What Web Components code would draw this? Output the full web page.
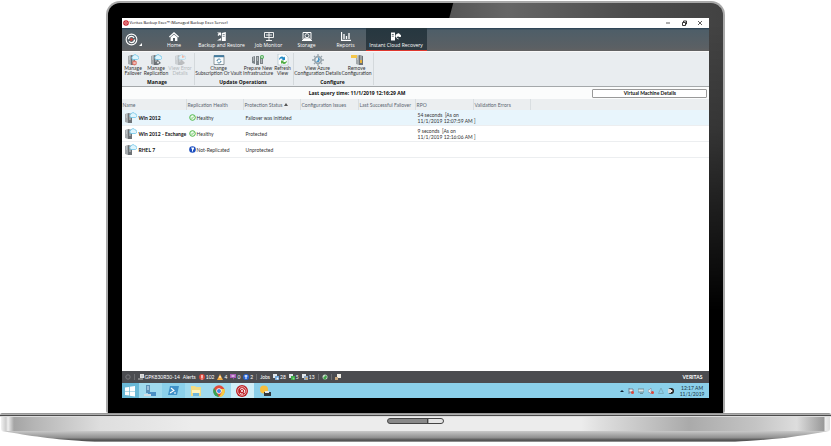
<!DOCTYPE html>
<html lang="en">
<head>
<meta charset="utf-8">
<title>Backup Exec</title>
<style>
html,body{margin:0;height:100%}
body{background:#fff;font:5px/6px Lato,"Open Sans",sans-serif;color:#333;display:flex;flex-direction:column}
</style>
</head>
<body>
<laptop-frame>
  <app-window>
    <title-bar></title-bar>
    <main-nav></main-nav>
    <ribbon-bar></ribbon-bar>
    <query-bar></query-bar>
    <vm-table></vm-table>
    <status-bar></status-bar>
    <task-bar></task-bar>
  </app-window>
</laptop-frame>
<script>
const svg=(w,h,body,vb)=>`<svg width="${w}" height="${h}" viewBox="${vb||`0 0 ${w} ${h}`}" aria-hidden="true">${body}</svg>`;
const define=(name,css,html)=>customElements.define(name,class extends HTMLElement{
  connectedCallback(){
    if(this.shadowRoot)return;
    const t=document.createElement('template');
    t.innerHTML=`<style>*{box-sizing:border-box}svg{display:block;flex:none}button{font:inherit;color:inherit;background:none;border:0;padding:0;margin:0}${css}</style>${typeof html==='function'?html(this):html}`;
    this.attachShadow({mode:'open'}).append(t.content.cloneNode(true));
  }
});

const server='<path d="M1 2l3-1v10l-3-1z" fill="#a4a9ac"/><path d="M4 1l4 1v9l-4 0z" fill="#6d7276"/><path d="M5 3h2M5 5h2M5 7h2M2 3h1M2 5h1" stroke="#e4e8ea" stroke-width=".8"/>';
const cloud='<path d="M6 5.5a1.8 1.8 0 010-3.4 2.2 2.2 0 014-.3 1.9 1.9 0 01.5 3.7z" fill="#dff4fc" stroke="#6cc5e9" stroke-width=".8"/>';
const target=s=>svg(s,s,'<circle cx="7" cy="7" r="5.800" fill="none" stroke="#fff" stroke-width="1.200"/><circle cx="7" cy="7" r="3.300" fill="none" stroke="#fff" stroke-width="1.300" stroke-dasharray="8 2.400"/><path d="M6 5.200L9 7 6 8.800z" fill="#e8392f"/>','0 0 14 14');

define('laptop-frame',`
:host{display:flex;flex-direction:column;min-height:100%;padding-bottom:4px;box-sizing:border-box}
.lid{flex:1;display:flex;margin:1px 12.7% 0;padding:15px 14px;border:2px solid #a9a9a9;border-bottom:0;border-radius:14px 14px 2px 2px;
background:linear-gradient(#000,#000) 0 15px/14px 100% no-repeat,linear-gradient(#000,#000) 0 100%/100% 15px no-repeat,linear-gradient(105deg,#000 0 333px,transparent 334px) 0 0/100% 15px no-repeat,linear-gradient(180deg,#0000 0,#0000 5%,#0003 30%,#000 75%),linear-gradient(90deg,#555 0 55%,#666 65%,#4c4c4c 85%,#424242)}
::slotted(*){flex:1}
.top{height:4px;background:linear-gradient(#8c8c8c,#b9b9b9 50%,#444 55%,#555 75%,#ddd 76%);border-radius:2px 2px 0 0}
.deck{height:14px;margin:0 1px;display:flex;justify-content:center;border-radius:0 0 2px 2px;background:linear-gradient(90deg,#f2f2f2 0,#ccc 5px,#f0f0f0 7px,#a4a4a4 13px,#b5b5b5 4%,#dedede 12%,#ececec 23%,#ececec 70%,#e0e0e0 72%,#aaa 83%,#c4c4c4 91%,#ddd 96%,#999 calc(100% - 6px),#eee calc(100% - 5px),#ddd)}
.notch{width:57px;height:6px;margin-top:1px;border:1px solid #444;border-radius:3px;background:linear-gradient(90deg,#888 0 71%,#333 72% 73%,#e5e5e5 74%)}
.foot{width:100%;height:11px}`,
`<div class="lid"><slot></slot></div><div class="top"></div><div class="deck"><div class="notch"></div></div>
<svg class="foot" viewBox="0 0 831 11" preserveAspectRatio="none" aria-hidden="true"><defs><linearGradient id="g" gradientUnits="userSpaceOnUse" x1="0" y1="0" x2="0" y2="11"><stop stop-color="#c8c8c8"/><stop offset=".6" stop-color="#909090"/><stop offset=".85" stop-color="#4c4c4c"/><stop offset="1" stop-color="#aaa"/></linearGradient></defs><path d="M2 0H829C800 5 782 8 735 11H95C49 8 31 5 2 0z" fill="url(#g)"/></svg>`);

define('app-window',`:host{display:flex;flex-direction:column;background:#fff;min-width:0;overflow:hidden}`,'<slot></slot>');

define('title-bar',`
:host{display:flex;align-items:center;height:10px;padding:0 6px 0 1px;gap:1px;background:#fff;color:#000}
span{flex:1;font-family:"Open Sans",sans-serif;font-size:4px}.w{display:flex;gap:10px}`,
svg(6,6,'<circle cx="3" cy="3" r="2.8" fill="#c8202c"/><circle cx="3" cy="3" r="1.3" fill="none" stroke="#f7c9c9" stroke-width=".7"/>')+
`<span>Veritas Backup Exec™ (Managed Backup Exec Server)</span><div class="w">
<button aria-label="Minimize">${svg(6,6,'<path d="M1 3h4" stroke="#333" stroke-width=".8"/>')}</button>
<button aria-label="Restore">${svg(6,6,'<path d="M1.5 2.5h3v3h-3zM2.5 2V1h3v3h-1" fill="none" stroke="#222" stroke-width=".9"/>')}</button>
<button aria-label="Close">${svg(6,6,'<path d="M1 1l4 4M5 1L1 5" stroke="#333" stroke-width=".8"/>')}</button></div>`);

const navIcons={
home:'<path d="M5 0l5 4.6-.7.8L5 1.7.7 5.4 0 4.6z" fill="#fff"/><path d="M1.6 5.3L5 2.4l3.4 2.9V9H6V6H4v3H1.6z" fill="#fff"/>',
backup:'<path d="M4.800 1l4-1v9h-4z" fill="#fff"/><path d="M5.700 2.500h2M5.700 4.300h2" stroke="#52606a" stroke-width=".7"/><path d="M0 .5h4V4L2.800 2.800 1.500 4 .5 3l1.200-1.300zM0 8.500h4V6z" fill="#fff"/>',
job:'<path d="M.5.5h9v5h-9zM5 5.5v3M2 8.5h6M5 1v4M2 3h6" fill="none" stroke="#fff" stroke-width=".9"/>',
storage:'<path d="M1 .5h8v7H1z" fill="none" stroke="#fff"/><circle cx="5" cy="3.7" r="2" fill="none" stroke="#fff" stroke-width=".9"/><path d="M2 6.3h6M0 8.5h10" stroke="#fff"/>',
reports:'<path d="M.5 0v8.5H10M3 2v5M5.5 4v3M8 1v6" fill="none" stroke="#fff" stroke-width="1.3"/>',
cloud:'<path d="M0 .5h4v8H0z" fill="#fff"/><path d="M4.500 5V3.500A1.600 1.600 0 016 2a1.700 1.700 0 013 .5 1.400 1.400 0 01.5 2.500H7.500V4L5 5.800l2.500 1.700V6.500" fill="#fff"/><path d="M.8 2.500h2M.8 4.200h2" stroke="#2a3941" stroke-width=".7"/>'};
define('nav-item',`
:host{display:block;flex:none}
button{width:100%;height:100%;display:flex;flex-direction:column;align-items:center;gap:1px;padding-top:4px;color:#fff;font-family:"Open Sans",sans-serif;line-height:7px;white-space:nowrap;border-bottom:1px solid transparent}
:host([active]) button{background:linear-gradient(#263740,#2f3a41);border-color:#e0372e}`,
el=>`<button>${svg(10,9,navIcons[el.getAttribute('icon')])}<slot></slot></button>`);
define('main-nav',`
:host{display:block;background:linear-gradient(#263f52 0,#4e5e68 2px,#5b6064 85%,#626262)}
nav{display:flex;height:23px}.logo{width:33px;display:flex;align-items:center;padding-left:3px;gap:1px}.logo .t{align-self:flex-end;margin-bottom:5px}`,
`<nav aria-label="Main"><button class="logo" aria-label="Menu">${target(13)}<span class="t">${svg(3,3,'<path d="M3 0v3H0z" fill="#fff"/>')}</span></button>
${[['home','Home',39],['backup','Backup and Restore',56],['job','Job Monitor',38],['storage','Storage',38],['reports','Reports',40],['cloud','Instant Cloud Recovery',61]].map(([i,t,w])=>`<nav-item icon="${i}" style="width:${w}px"${i==='cloud'?' active':''}>${t}</nav-item>`).join('')}</nav>`);

const rIcons={
failover:server+cloud+'<circle cx="7.5" cy="9" r="2.4" fill="#e0786c"/><path d="M6.3 9h2.4" stroke="#fff"/>',
replicate:server+cloud+'<path d="M5 9l3-3 3 3-3 2z" fill="#6f767b"/><circle cx="8" cy="8.5" r="1" fill="#eee"/>',
error:'<g opacity=".4">'+server+cloud+'<path d="M5 9l3-3 3 3-3 2z" fill="#777"/></g><path d="M8 1l3 2-3 1z" fill="#f2b7a5"/>',
change:'<path d="M1 1.5h10v9H1z" fill="#f9fbfc" stroke="#748087" stroke-width=".8"/><path d="M1 1.2h10v2H1z" fill="#437ca0"/><path d="M4 7a2 2 0 013.5-1.2M8 7a2 2 0 01-3.5 1.2" fill="none" stroke="#38779a"/>',
prepare:'<path d="M0 3l3-1v8l-3-1zM4 2h3v9H4zM8 3h3v7H8z" fill="#7c8388"/><path d="M1 4h1M1 6h1M5 4h1M5 6h1M9 6h1M9 8h1" stroke="#e3e6e8"/><circle cx="10" cy="3" r="2" fill="#4eae56"/><path d="M9 3h2M10 2v2" stroke="#fff" stroke-width=".6"/>',
refresh:'<path d="M1 0h7l3 3v8H1z" fill="#fdfefe" stroke="#a5b9c3" stroke-width=".6"/><path d="M2 6c0-3 3-4.500 5-2.500l1-1V6H4.800l1-1C4.500 4 3 4.500 2 6z" fill="#238ac5"/><path d="M10 6.500c0 3-3 4.500-5 2.500l-1 1V6.500h3.200l-1 1c1.300 1 2.800.5 3.800-1z" fill="#53ae45"/>',
azure:'<circle cx="6" cy="6" r="3.300" fill="none" stroke="#9aa6ae" stroke-width="1.700"/><path d="M6 0v2M6 10v2M0 6h2M10 6h2M2 2l1 1M9 9l1 1M10 2L9 3M3 9l-1 1" stroke="#9aa6ae" stroke-width="1.300"/><path d="M6 3l2 2-1 3H4l2-2z" fill="#4b97c8"/>',
remove:'<g transform="translate(4 0)">'+server+'</g><path d="M0 1h6v3H0z" fill="#f4c64a"/><path d="M9 6h2v3H9z" fill="#e5b13b"/>'};
define('ribbon-group',`
:host{display:flex;flex-direction:column;flex:none;border-right:1px solid #d4d9dc;margin:1px 0;padding-right:1px}
.b{display:flex;flex:1}b{display:block;text-align:center;color:#111;line-height:6px;font-family:"Open Sans",sans-serif}`,
el=>`<div class="b"><slot></slot></div><b>${el.getAttribute('label')}</b>`);
define('ribbon-button',`
:host{display:block;flex:none}button{width:100%;display:flex;flex-direction:column;align-items:center;padding-top:1px;line-height:5px;text-align:center;white-space:nowrap;color:#333}
button:disabled{color:#b5babd}`,
el=>`<button${el.hasAttribute('disabled')?' disabled':''}>${svg(12,12,rIcons[el.getAttribute('icon')])}<span>${el.getAttribute('top')}<br>${el.getAttribute('bottom')}</span></button>`);
const rb=(i,a,b,w,d='')=>`<ribbon-button icon="${i}" top="${a}" bottom="${b}" style="width:${w}px" ${d}></ribbon-button>`;
define('ribbon-bar',`:host{display:flex;box-sizing:border-box;height:36px;background:#e9edf0;border-top:1px solid #f8f8f8;border-bottom:1px solid #a4a8aa}`,
`<ribbon-group label="Manage">${rb('failover','Manage','Failover',23)}${rb('replicate','Manage','Replication',23)}${rb('error','View Error','Details',25,'disabled')}</ribbon-group>
<ribbon-group label="Update Operations">${rb('change','Change','Subscription Or Vault',48)}${rb('prepare','Prepare New','Infrastructure',31)}${rb('refresh','Refresh','View',18)}</ribbon-group>
<ribbon-group label="Configure">${rb('azure','View Azure','Configuration Details',48)}${rb('remove','Remove','Configuration',30)}</ribbon-group>`);

define('query-bar',`
:host{display:flex;box-sizing:border-box;align-items:center;height:12px;background:#fbfcfc;color:#111;padding-right:2px}
b{flex:1;font-family:"Noto Sans",sans-serif;text-align:center;white-space:nowrap}
button{width:115px;height:9px;border:1px solid #999;border-radius:1px;background:#fff;font-weight:bold;line-height:6px}`,
`<b>Last query time: 11/1/2019 12:16:29 AM</b><button>Virtual Machine Details</button>`);

const ok=svg(7,7,'<circle cx="3.500" cy="3.500" r="2.800" fill="#effaed" stroke="#4eb748" stroke-width="1"/><path d="M2 3.500l1 1 2-2" fill="none" stroke="#4eb748" stroke-width=".8"/>');
const info=svg(7,7,'<circle cx="3.500" cy="3.500" r="3.300" fill="#1d4fc0"/><path d="M2 1.500h3v2H4v2H3v-2z" fill="#fff"/>');
const vm=svg(13,12,server+'<g transform="translate(1 0)">'+cloud+'</g>');
const rows=[['Win 2012',ok,'Healthy','Failover was initiated','54 seconds&nbsp; [As on<br>11/1/2019 12:07:59 AM ]'],['Win 2012 - Exchange',ok,'Healthy','Protected','9 seconds&nbsp; [As on<br>11/1/2019 12:16:06 AM ]'],['RHEL 7',info,'Not-Replicated','Unprotected','']];
define('vm-table',`
:host{display:block;flex:1;background:#fff}
table{width:100%;border-collapse:separate;border-spacing:0;table-layout:fixed}
th{height:11px;padding:0 0 0 1px;text-align:left;font-weight:normal;color:#5b6670;background:#ebeef0;border-right:1px solid #d9dee1;white-space:nowrap}
th:last-child{border-right:0}
td{height:16px;padding:0 0 0 2px;border-bottom:1px solid #eceef0;white-space:nowrap}
tr.sel td{background:#e8f5fc}
.c{display:flex;align-items:center;gap:1px}.n{gap:2px;color:#111;font-weight:bold}
th svg{display:inline-block;margin-left:2px;vertical-align:1px}`,
`<table><colgroup>${[65,57,57,58,57,58,57].map(w=>`<col style="width:${w}px">`).join('')}<col></colgroup>
<thead><tr><th>Name</th><th>Replication Health</th><th aria-sort="ascending">Protection Status${svg(4,3,'<path d="M0 3l2-3 2 3z" fill="#555"/>')}</th><th>Configuration Issues</th><th>Last Successful Failover</th><th>RPO</th><th>Validation Errors</th><th></th></tr></thead>
<tbody>${rows.map((r,i)=>`<tr${i?'':' class="sel"'}><td><div class="c n">${vm}<span>${r[0]}</span></div></td><td><div class="c">${r[1]}<span>${r[2]}</span></div></td><td>${r[3]}</td><td></td><td></td><td>${r[4]}</td><td></td><td></td></tr>`).join('')}</tbody></table>`);

const s6=b=>svg(6,6,b);
const jobIc=(a,b)=>s6(`<path d="M0 0h4v4H0z" fill="#dfe5ea"/><path d="M2 2h4v4H2z" fill="${a}"/><circle cx="4.500" cy="4.500" r="1" fill="${b}"/>`);
define('status-bar',`
:host{display:flex;box-sizing:border-box;align-items:center;height:12px;padding:0 7px 0 3px;background:#4b4c50;color:#fff;gap:3px}
.g{display:flex;align-items:center;gap:3px}.i{display:flex;align-items:center;gap:1px}
.sep{border-left:1px solid #6c6d70;padding-left:3px}b{margin-left:auto}`,
`<div class="i">${s6('<circle cx="3" cy="3" r="2.200" fill="none" stroke="#77787b"/>')}</div>
<div class="g sep"><span class="i">${s6('<path d="M2 0h4v4H2z" fill="#ddd"/><path d="M0 5h5M3 2h2" stroke="#bbb"/>')}GPK830R30-14</span></div>
<div class="g">Alerts<span class="i">${s6('<circle cx="3" cy="3" r="2.900" fill="#d9473c"/><path d="M3 1v3M3 4.500v1" stroke="#fff" stroke-width="1.200"/>')}102</span><span class="i">${s6('<path d="M3 0l3 6H0z" fill="#f3ac43"/><path d="M3 2v2" stroke="#fff"/>')}4</span><span class="i">${s6('<path d="M0 0h6v4H4L3 6V4H0z" fill="#a55bb5"/><path d="M1.500 2h3" stroke="#fff"/>')}0</span><span class="i">${s6('<circle cx="3" cy="3" r="3" fill="#2864d5"/><path d="M3 1v4M1.500 2h3" stroke="#fff"/>')}2</span></div>
<div class="g sep">Jobs<span class="i">${jobIc('#72a5d6','#fff')}28</span><span class="i">${jobIc('#3cab46','#88da88')}5</span><span class="i">${jobIc('#91abc8','#e8a33b')}13</span></div>
<div class="g sep">${s6('<circle cx="3" cy="3" r="2.500" fill="#c8d9ca"/><path d="M1 4l3-3 1 2-2 3z" fill="#41a54a"/>')}</div>
<div class="g sep">${s6('<path d="M2 0h4v4H2z" fill="#f0eee6"/><path d="M0 3h3v3H0z" fill="#c9a67c"/>')}</div><b>VERITAS</b>`);

const tb=(n,c,b)=>`<button class="${c}" aria-label="${n}">${svg(12,12,b)}</button>`;
define('task-bar',`
:host{display:flex;height:15px;background:#8bd0ea;color:#17323d}
.a{display:flex}.a button{width:23px;display:grid;place-items:center}.a .s{width:17px;background:#69b8d6}.a .o{background:#a0daee}.a .on{background:#d0eff8}
.tray{margin-left:auto;display:flex;align-items:center;gap:4px;padding-right:5px}time{text-align:center;margin-left:2px;line-height:6px}`,
`<div class="a">${tb('Start','s','<path d="M1 2.500l4-.6v4H1zM5.700 1.800L11 1v4.900H5.700zM1 6.500h4v4l-4-.6zM5.700 6.500H11v5l-5.300-.8z" fill="#fff"/>')}
${tb('Server Manager','o','<path d="M2 0h4v8H2z" fill="#5b90b6"/><path d="M3 2h2M3 4h2" stroke="#def"/><path d="M4 7h8v4H4z" fill="#4b8fc4"/><path d="M0 9h7v2H0z" fill="#d4dde2"/>')}
${tb('PowerShell','','<path d="M3 1h9l-2 9H1z" fill="#3f91c8"/><path d="M4 3l3 2.500L3 8M7 8h2" fill="none" stroke="#fff" stroke-width="1.100"/>')}
${tb('File Explorer','o','<path d="M1 1h4l1 1h5v9H1z" fill="#f3dc82"/><path d="M2 5h8v3H2z" fill="#fff3bd"/><path d="M3 8h6v3H3z" fill="#70b6dc"/>')}
${tb('Chrome','o','<circle cx="6" cy="6" r="5.700" fill="#e04a3b"/><path d="M1 3l3 5 2 4A6 6 0 011 3z" fill="#35a353"/><path d="M11.500 4A6 6 0 016 12l3-5-3-3z" fill="#f7cd42"/><circle cx="6" cy="6" r="2.700" fill="#fff"/><circle cx="6" cy="6" r="2" fill="#4285e8"/>')}
${tb('Backup Exec','on','<circle cx="6" cy="6" r="6" fill="#bd2228"/><circle cx="6" cy="6" r="4.300" fill="none" stroke="#f4cbc7" stroke-width=".8"/><path d="M4 4.500A2.500 2.500 0 118 8M7 9a3 3 0 01-3-1" fill="none" stroke="#fff"/><circle cx="6" cy="6" r="1" fill="#fff"/>')}
${tb('Tools','','<circle cx="5" cy="4.500" r="4" fill="#f5bd3c"/><path d="M5 7h7v4H5z" fill="#30363c"/><path d="M6 6h4v2H6z" fill="#e3e6e8"/>')}</div>
<div class="tray">${svg(4,4,'<path d="M0 3l2-2 2 2z" fill="#123"/>')}
${s6('<path d="M1 0v6M1 1h4v3H1" fill="#eee" stroke="#667" stroke-width=".7"/><circle cx="4.500" cy="4.500" r="1.500" fill="#e04438"/>')}
${s6('<path d="M0 1h6v3H0zM2 5.500h3" fill="#d5e6ec" stroke="#667d87" stroke-width=".8"/>')}
${s6('<path d="M0 2h1l2-2v6L1 4H0z" fill="#eee" stroke="#778" stroke-width=".5"/><circle cx="4.500" cy="4.500" r="1.500" fill="#e04438"/>')}
${s6('<path d="M3 0l2.500 5.500h-5z" fill="none" stroke="#78a5b5" stroke-width=".8"/>')}
${s6('<circle cx="3" cy="3" r="3" fill="#222"/><path d="M0 1h3v4H0z" fill="#d8d8d8"/><circle cx="3.500" cy="3" r="1" fill="#fff"/>')}
<time>12:17 AM<br>11/1/2019</time></div>`);
</script>
</body>
</html>
